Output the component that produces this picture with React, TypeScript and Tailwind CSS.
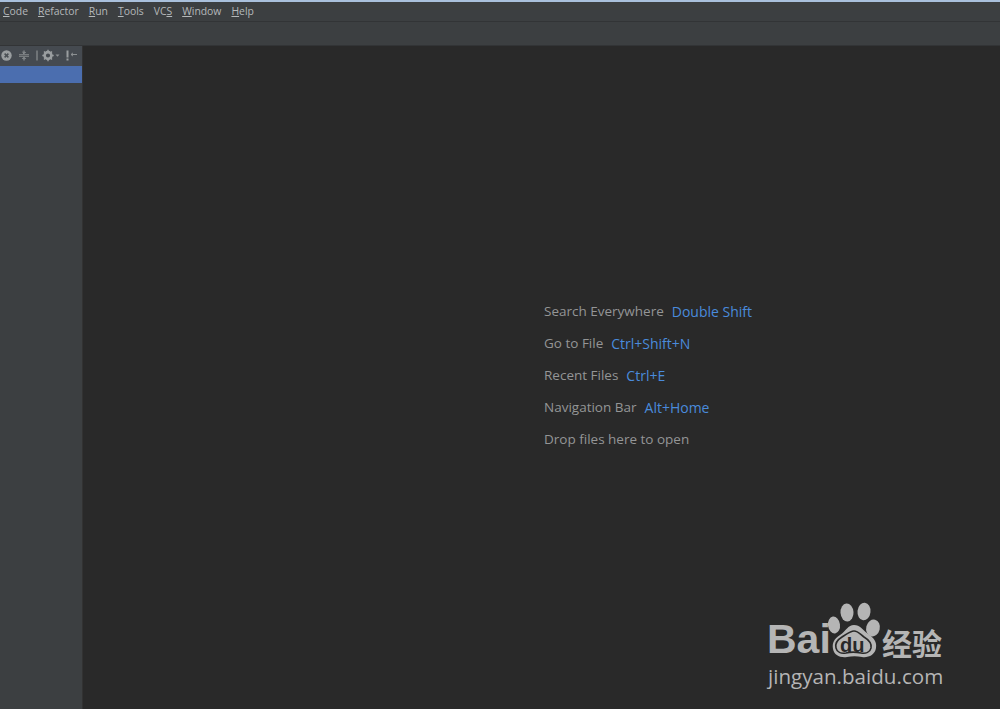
import type { ReactNode } from 'react';

const menus: [string, string][] = [
  ['C', 'ode'],
  ['R', 'efactor'],
  ['R', 'un'],
  ['T', 'ools'],
  ['VC', 'S'],
  ['W', 'indow'],
  ['H', 'elp'],
];

const hints = [
  { label: 'Search Everywhere', keys: 'Double Shift' },
  { label: 'Go to File', keys: 'Ctrl+Shift+N' },
  { label: 'Recent Files', keys: 'Ctrl+E' },
  { label: 'Navigation Bar', keys: 'Alt+Home' },
  { label: 'Drop files here to open', keys: '' },
];

function MenuItem({ children }: { children: ReactNode }) {
  return <span className="text-[10.4px] leading-none text-[#b4b8ba]">{children}</span>;
}

function PanelIcons() {
  return (
    <svg width="82" height="20" viewBox="0 0 82 20" fill="none" className="block">
      {/* close circle */}
      <circle cx="6.5" cy="9.5" r="5.2" fill="#9a9ea0" />
      <path d="M4.6 7.6l3.8 3.8M8.4 7.6l-3.8 3.8" stroke="#4a4f54" strokeWidth="1.5" />
      {/* collapse */}
      <path d="M19 8.7h10M19 10.3h10" stroke="#8c9092" strokeWidth="0.9" />
      <path d="M24 4.5v3M22.4 6L24 7.6 25.6 6M24 14.5v-3M22.4 13L24 11.4 25.6 13" stroke="#9a9ea0" strokeWidth="1" />
      {/* divider */}
      <path d="M37 4.5v10" stroke="#8c9092" strokeWidth="1.2" />
      {/* gear */}
      <circle cx="48" cy="9.5" r="3.4" stroke="#9a9ea0" strokeWidth="2.6" />
      <path d="M48 3.8v2.4M48 12.8v2.4M42.3 9.5h2.4M51.3 9.5h2.4M44 5.5l1.7 1.7M50.3 11.8l1.7 1.7M44 13.5l1.7-1.7M50.3 7.2L52 5.5" stroke="#9a9ea0" strokeWidth="1.4" />
      <path d="M55.5 8.5h4l-2 2.2z" fill="#8c9092" />
      {/* hide */}
      <path d="M67.5 4.5v7M67.5 12.5v2" stroke="#9a9ea0" strokeWidth="2" />
      <path d="M71 8.5h6M71 8.5l2-1.6M71 8.5l2 1.6" stroke="#8c9092" strokeWidth="1" />
    </svg>
  );
}

function Paw() {
  return (
    <svg width="60" height="60" viewBox="0 0 60 60" className="block">
      <g fill="#b5b5b5">
        <ellipse cx="9" cy="25" rx="6" ry="8.5" transform="rotate(-8 9 25)" />
        <ellipse cx="22" cy="12.5" rx="6.5" ry="9" transform="rotate(-4 22 12.5)" />
        <ellipse cx="39" cy="11.5" rx="6.5" ry="8.8" transform="rotate(6 39 11.5)" />
        <ellipse cx="48" cy="28" rx="6.8" ry="8.5" transform="rotate(14 48 28)" />
        <path d="M29 25c6 0 9 5 14 9 6 4 9 8 8 14-1 7-8 10-14 9-5-1-10-1-15 0-7 1-13-2-14-8-1-6 1-10 7-14 6-4 8-10 14-10z" />
      </g>
      <path
        d="M29 31c4 0 6 3 10 6 5 3 8 6 7 11-1 4-5 6-10 5-5-1-11-1-15 0-5 1-9-1-10-5-1-4 1-8 6-11 5-3 8-6 12-6z"
        fill="none"
        stroke="#292929"
        strokeWidth="1.6"
      />
    </svg>
  );
}

export default function App() {
  return (
    <div className="flex h-[709px] w-[1000px] flex-col overflow-hidden bg-[#292929] font-['Open_Sans','Noto_Sans',sans-serif]">
      <div className="h-[2px] shrink-0 bg-[#a9c0dc]" />

      {/* Menu bar */}
      <div className="flex h-[20px] shrink-0 items-center gap-[10px] border-b border-[#323436] bg-[#3c3f41] pb-[1px] pl-[3px]">
        {menus.map(([mn, rest], i) => (
          <MenuItem key={i}>
            {mn === 'VC' ? (
              <>
                VC<span className="underline">S</span>
              </>
            ) : (
              <>
                <span className="underline">{mn}</span>
                {rest}
              </>
            )}
          </MenuItem>
        ))}
      </div>

      {/* Toolbar */}
      <div className="h-[24px] shrink-0 border-b border-[#323436] bg-[#3c3f41]" />

      <div className="relative flex min-h-0 flex-1">
        {/* Project panel */}
        <aside className="flex w-[83px] shrink-0 flex-col border-r border-[#323232] bg-[#3c3f41]">
          <div className="h-[20px] shrink-0 bg-[#454a50]">
            <PanelIcons />
          </div>
          <div className="h-[17px] shrink-0 bg-[#4b6eaf]" />
        </aside>

        {/* Editor empty state */}
        <main className="flex flex-1 flex-col pl-[461px] pt-[255px]">
          <div className="flex flex-col gap-[10px]">
            {hints.map((h) => (
              <div key={h.label} className="flex h-[22px] items-center gap-[8px] text-[13.5px] leading-none">
                <span className="text-[#949596]">{h.label}</span>
                {h.keys && <span className="text-[14px] text-[#4a8bdc]">{h.keys}</span>}
              </div>
            ))}
          </div>
        </main>

        {/* Watermark */}
        <div className="absolute left-[767px] top-[554px] w-[180px]">
          <div className="flex h-[60px] items-end">
            <span className="w-[58px] font-['Liberation_Sans'] text-[41px] font-bold leading-[41px] text-[#b5b5b5]">Bai</span>
            <div className="relative h-[60px] w-[57px] shrink-0">
              <Paw />
              <span className="absolute left-[15px] top-[35px] font-['Liberation_Sans'] text-[20px] font-bold leading-none text-[#292929]">du</span>
            </div>
            <span className="font-['Noto_Sans_CJK_SC'] text-[30px] font-bold leading-[36px] text-[#b5b5b5]">经验</span>
          </div>
          <div className="ml-[1px] mt-[3px] font-['Open_Sans'] text-[20.6px] leading-[26px] text-[#b5b5b5]">jingyan.baidu.com</div>
        </div>
      </div>
    </div>
  );
}
